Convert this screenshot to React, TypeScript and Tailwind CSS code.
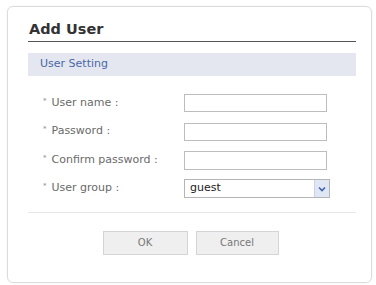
import React from "react";

const font = { fontFamily: '"DejaVu Sans", Verdana, sans-serif' };

function Row({ label, children }: { label: string; children: React.ReactNode }) {
  return (
    <div className="flex items-center h-[18px]">
      <div className="w-[156px] pl-[15px] flex items-center text-[11px] text-[#6a6a6a]">
        <span className="text-[7px] -mt-[4px] mr-[5px] text-[#888]">*</span>
        <span>{label}</span>
      </div>
      {children}
    </div>
  );
}

export default function App() {
  return (
    <div className="w-[376px] h-[285px] bg-white overflow-hidden pt-[6px] pl-[7px]" style={font}>
      <div className="w-[365px] h-[277px] border border-[#dcdcdc] rounded-[6px] pl-[20px] pr-[15px] shadow-[0_0_2px_rgba(0,0,0,0.08)]">
        <div className="pt-[13px] h-[34px] text-[14.5px] font-bold text-[#333] pl-[1px] leading-[18px]">Add User</div>
        <div className="h-px bg-[#555]"></div>
        <div className="mt-[11px] h-[23px] bg-[#e4e7ef] flex items-center pl-[12px] text-[11px] text-[#4a68a6]">User Setting</div>
        <div className="pt-[18px] flex flex-col gap-[10.5px]">
          <Row label="User name :">
            <div className="w-[143px] h-[18px] border border-[#bdbdbd] bg-white"></div>
          </Row>
          <Row label="Password :">
            <div className="w-[143px] h-[18px] border border-[#bdbdbd] bg-white"></div>
          </Row>
          <Row label="Confirm password :">
            <div className="w-[143px] h-[19px] border border-[#bdbdbd] bg-white"></div>
          </Row>
          <Row label="User group :">
            <div className="w-[146px] h-[19px] border border-[#b5b5b5] bg-white flex items-center">
              <span className="flex-1 pl-[5px] text-[11px] text-[#222]">guest</span>
              <div className="w-[15px] h-[17px] bg-[#dfe7f4] border-l border-[#c7d3e6] flex items-center justify-center">
                <svg width="8" height="6" viewBox="0 0 8 6">
                  <path d="M1 1.5 L4 4.5 L7 1.5" stroke="#3f63a8" strokeWidth="1.6" fill="none" />
                </svg>
              </div>
            </div>
          </Row>
        </div>
        <div className="mt-[14px] h-px bg-[#e6e6e6]"></div>
        <div className="mt-[18px] flex justify-center gap-[8px] pr-[3px]">
          <div className="w-[85px] h-[24px] bg-[#efefef] border border-[#d4d4d4] flex items-center justify-center text-[10px] text-[#777]">OK</div>
          <div className="w-[83px] h-[24px] bg-[#efefef] border border-[#d4d4d4] flex items-center justify-center text-[10px] text-[#777]">Cancel</div>
        </div>
      </div>
    </div>
  );
}
